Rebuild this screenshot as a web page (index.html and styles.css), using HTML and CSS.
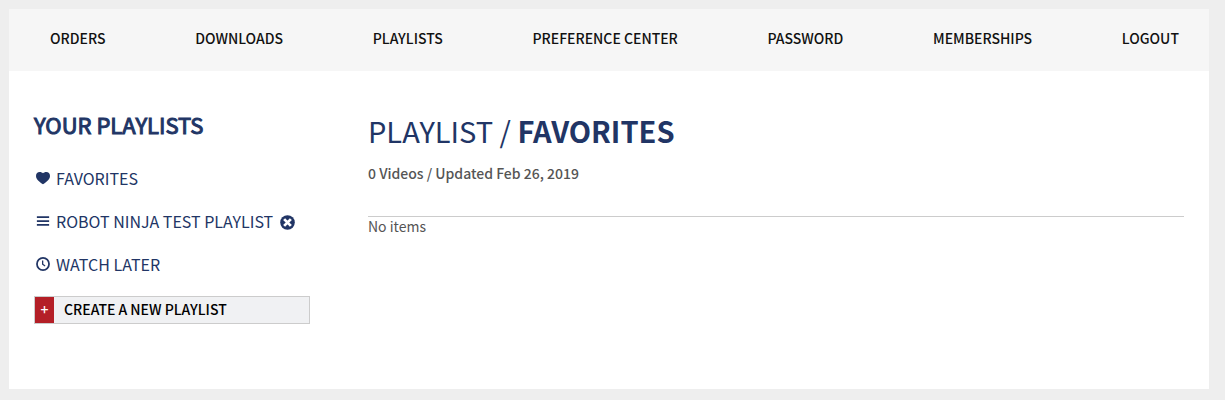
FILE: index.html
```
<!DOCTYPE html>
<html lang="en">
<head>
	<title>Playlists</title>
	<meta charset="utf-8">
	<link rel="stylesheet" href="styles.css">
</head>
<body>
<div class="page">
	<nav class="account-nav">
		<a href="#">ORDERS</a>
		<a href="#">DOWNLOADS</a>
		<a href="#">PLAYLISTS</a>
		<a href="#">PREFERENCE CENTER</a>
		<a href="#">PASSWORD</a>
		<a href="#">MEMBERSHIPS</a>
		<a href="#">LOGOUT</a>
	</nav>

	<div class="content">
		<aside class="sidebar">
			<h2>YOUR PLAYLISTS</h2>
			<ul class="playlists">
				<li>
					<svg class="icon" viewBox="0 0 16 16"><path d="M8 15C5.6 13.6 0 10 0 5.6C0 2.8 1.8 1 4.2 1C5.9 1 7.2 1.7 8 2.6C8.8 1.7 10.1 1 11.8 1C14.2 1 16 2.8 16 5.6C16 10 10.4 13.6 8 15Z"/></svg>
					<a href="#">FAVORITES</a>
				</li>
				<li>
					<svg class="icon" viewBox="0 0 16 16"><path d="M1 2.5h14v2H1zM1 7h14v2H1zM1 11.5h14v2H1z"/></svg>
					<a href="#">ROBOT NINJA TEST PLAYLIST</a>
					<button class="remove" type="button" aria-label="Remove playlist">
						<svg class="icon" viewBox="0 0 16 16"><circle cx="8" cy="8" r="7.8"/><path class="cross" d="M4.4 4.4l7.2 7.2M11.6 4.4l-7.2 7.2"/></svg>
					</button>
				</li>
				<li>
					<svg class="icon clock" viewBox="0 0 16 16"><circle cx="8" cy="8" r="6.9"/><path class="hands" d="M7.6 4v4.2l2.8 2"/></svg>
					<a href="#">WATCH LATER</a>
				</li>
			</ul>
			<button class="create" type="button">
				<span class="plus">+</span>
				<span class="label">CREATE A NEW PLAYLIST</span>
			</button>
		</aside>

		<main class="playlist">
			<h1>PLAYLIST / <strong>FAVORITES</strong></h1>
			<p class="meta">0 Videos / Updated Feb 26, 2019</p>
			<div class="items">No items</div>
		</main>
	</div>
</div>
</body>
</html>
```
FILE: styles.css
```
*{
	box-sizing: border-box;
}
body{
	margin: 0;
	padding: 9px 16px 11px 9px;
	background-color: #eee;
	color: #555;
	font-family: "Noto Sans CJK SC", "Open Sans", sans-serif;
	font-size: 14px;
	line-height: 20px;
}
a{
	color: inherit;
	text-decoration: none;
}
h1, h2, p, ul{
	margin: 0;
	padding: 0;
}
.page{
	min-height: calc(100vh - 20px);
	background-color: #fff;
}
.account-nav{
	display: flex;
	justify-content: space-between;
	padding: 19px 30px 23px 41px;
	background-color: #f6f6f6;
	color: #111;
	font-weight: 500;
}
.content{
	display: grid;
	grid-template-columns: 276px 1fr;
	column-gap: 58px;
	padding: 39px 25px;
}

/* sidebar */
.sidebar h2{
	margin-bottom: 28px;
	color: #213565;
	font-size: 22px;
	font-weight: 400;
	line-height: 28px;
	-webkit-text-stroke: 1px #213565;
}
.playlists{
	list-style: none;
	color: #213565;
	font-size: 16px;
	line-height: 24px;
}
.playlists li{
	display: flex;
	align-items: center;
	margin-bottom: 19px;
}
.icon{
	display: block;
	width: 14px;
	height: 14px;
	margin: 0 6px 0 2px;
	fill: #213565;
}
.clock{
	fill: none;
	stroke: #213565;
	stroke-width: 2;
}
.hands{
	stroke-width: 1.5;
}
.remove{
	margin-left: 7px;
	padding: 3px 0 0;
	border: 0;
	background: none;
	cursor: pointer;
}
.remove .icon{
	width: 15px;
	height: 15px;
	margin: 0;
}
.cross{
	fill: none;
	stroke: #fff;
	stroke-width: 3;
}
.create{
	display: flex;
	width: 100%;
	margin-top: 20px;
	padding: 0;
	border: 1px solid #ccc;
	background-color: #f0f1f3;
	color: #000;
	font: inherit;
	font-weight: 500;
	line-height: 24px;
	cursor: pointer;
}
.create span{
	padding-bottom: 2px;
}
.plus{
	width: 19px;
	background-color: #b41f27;
	color: #fff;
}
.label{
	padding-left: 10px;
}

/* main column */
.playlist h1{
	margin-bottom: 13px;
	color: #213565;
	font-size: 29px;
	font-weight: 400;
	line-height: 40px;
}
.playlist strong{
	font-weight: 700;
}
.meta{
	margin-bottom: 33px;
	font-weight: 500;
}
.items{
	border-top: 1px solid #ccc;
	line-height: 18px;
}
```
